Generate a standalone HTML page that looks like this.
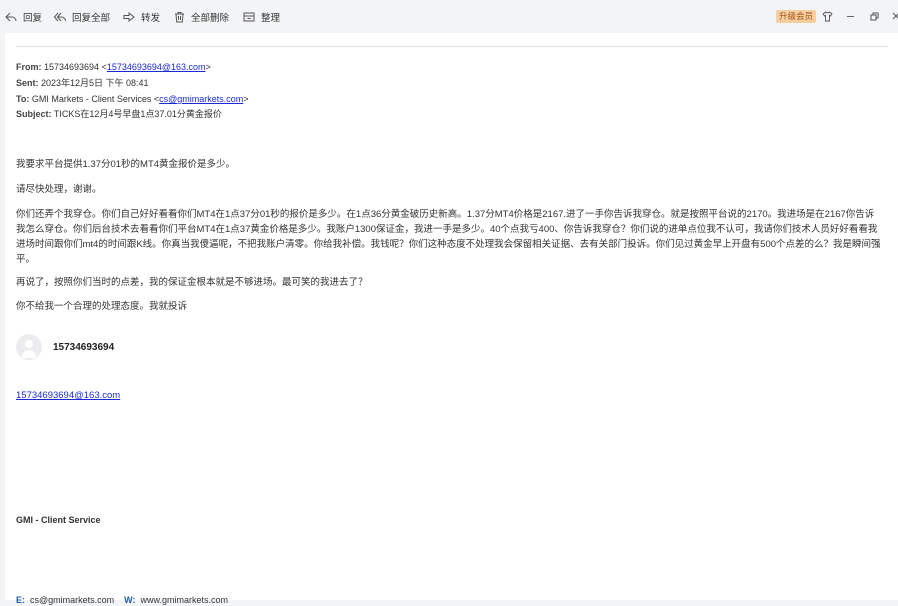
<!DOCTYPE html>
<html><head><meta charset="utf-8"><style>
*{margin:0;padding:0;box-sizing:border-box}
body{width:898px;height:600px;overflow:hidden;background:#f3f4f6;font-family:"Liberation Sans","Noto Sans CJK SC",sans-serif;color:#333;font-size:9px;position:relative}
.tb{position:absolute;top:0;left:0;width:898px;height:33px}
.t{position:absolute;top:10px;font-size:9.5px;color:#333;display:flex;align-items:center}
.t svg{margin-right:6px}
.main{position:absolute;left:5px;top:33px;width:893px;height:567px;background:#fff}
.a{position:absolute;left:16px;white-space:nowrap;line-height:12px;height:12px}
.a b{font-weight:bold;color:#444}
a{color:#1a2bd6;text-decoration:underline}
.p{position:absolute;left:16px;width:880px;line-height:15px;color:#333;white-space:nowrap;font-size:9.5px}
</style></head><body>
<div class="tb">
<div class="t" style="left:5px"><svg width="12" height="12" viewBox="0 0 12 12"><path d="M5 2L1 6l4 4M1 6h6a4 4 0 0 1 4 4" fill="none" stroke="#555" stroke-width="1"/></svg>回复</div>
<div class="t" style="left:54px"><svg width="12" height="12" viewBox="0 0 12 12"><path d="M4 2L0.5 6 4 10M7 2L3.5 6 7 10M3.5 6h4a4 4 0 0 1 4 4" fill="none" stroke="#555" stroke-width="1"/></svg>回复全部</div>
<div class="t" style="left:123px"><svg width="12" height="12" viewBox="0 0 12 12"><path d="M1 4.5h5V2l5 4-5 4V7.5H1z" fill="none" stroke="#555" stroke-width="1"/></svg>转发</div>
<div class="t" style="left:174px"><svg width="11" height="12" viewBox="0 0 11 12"><path d="M1 3h9M4 3V1.5h3V3M2 3l.7 8h5.6L9 3M4.5 5v4M6.5 5v4" fill="none" stroke="#555" stroke-width="1"/></svg>全部删除</div>
<div class="t" style="left:243px"><svg width="12" height="12" viewBox="0 0 12 12"><path d="M1 2h10v8H1zM1 5h10M4.5 7.5h3" fill="none" stroke="#555" stroke-width="1"/></svg>整理</div>
<div style="position:absolute;left:776px;top:10px;width:40px;height:13px;background:#f8cfa0;color:#a0521a;font-size:8.5px;text-align:center;line-height:13px;border-radius:2px">升级会员</div>
<svg style="position:absolute;left:822px;top:11px" width="11" height="11" viewBox="0 0 11 11"><path d="M3.5 1L1 3l1.5 2 1-.7V10h4V4.3l1 .7L10 3 7.5 1C7 2 4 2 3.5 1z" fill="none" stroke="#555" stroke-width=".9"/></svg>
<div style="position:absolute;left:847px;top:16px;width:7px;height:1px;background:#666"></div>
<svg style="position:absolute;left:870px;top:12px" width="9" height="9" viewBox="0 0 9 9"><path d="M1 3h5v5H1zM3 3V1h5v5H6" fill="none" stroke="#555" stroke-width="1"/></svg>
<svg style="position:absolute;left:892px;top:12px" width="8" height="8" viewBox="0 0 8 8"><path d="M1 1l6 6M7 1L1 7" stroke="#555" stroke-width="1"/></svg>
</div>
<div class="main"></div>
<div style="position:absolute;left:16px;top:46px;width:872px;height:1px;background:#e3e3e3"></div>
<div class="a" style="top:61px"><b>From:</b> 15734693694 &lt;<a>15734693694@163.com</a>&gt;</div>
<div class="a" style="top:77px"><b>Sent:</b> 2023年12月5日 下午 08:41</div>
<div class="a" style="top:93px"><b>To:</b> GMI Markets - Client Services &lt;<a>cs@gmimarkets.com</a>&gt;</div>
<div class="a" style="top:108px"><b>Subject:</b> TICKS在12月4号早盘1点37.01分黄金报价</div>
<div class="p" style="top:157px">我要求平台提供1.37分01秒的MT4黄金报价是多少。</div>
<div class="p" style="top:182px">请尽快处理，谢谢。</div>
<div class="p" style="top:207px">你们还弄个我穿仓。你们自己好好看看你们MT4在1点37分01秒的报价是多少。在1点36分黄金破历史新高。1.37分MT4价格是2167.进了一手你告诉我穿仓。就是按照平台说的2170。我进场是在2167你告诉<br>我怎么穿仓。你们后台技术去看看你们平台MT4在1点37黄金价格是多少。我账户1300保证金，我进一手是多少。40个点我亏400、你告诉我穿仓？你们说的进单点位我不认可，我请你们技术人员好好看看我<br>进场时间跟你们mt4的时间跟K线。你真当我傻逼呢，不把我账户清零。你给我补偿。我钱呢？你们这种态度不处理我会保留相关证据、去有关部门投诉。你们见过黄金早上开盘有500个点差的么？我是瞬间强<br>平。</div>
<div class="p" style="top:275px">再说了，按照你们当时的点差，我的保证金根本就是不够进场。最可笑的我进去了？</div>
<div class="p" style="top:299px">你不给我一个合理的处理态度。我就投诉</div>
<div style="position:absolute;left:16px;top:334px;width:26px;height:26px;border-radius:50%;background:#ececee;overflow:hidden"><div style="position:absolute;left:9px;top:6px;width:8px;height:8px;border-radius:50%;background:#fff"></div><div style="position:absolute;left:6px;top:16px;width:14px;height:8px;border-radius:7px 7px 0 0;background:#fff"></div></div>
<div class="a" style="left:53px;top:342px;font-size:10px;font-weight:bold;color:#222">15734693694</div>
<div class="a" style="top:390px;font-size:9.5px"><a>15734693694@163.com</a></div>
<div class="a" style="top:514px;font-weight:bold;color:#333">GMI - Client Service</div>
<div class="a" style="top:594px;color:#333"><span style="color:#1f5fa8;font-weight:bold">E:</span> &nbsp;cs@gmimarkets.com &nbsp;&nbsp;&nbsp;<span style="color:#1f5fa8;font-weight:bold">W:</span> &nbsp;www.gmimarkets.com</div>
</body></html>
